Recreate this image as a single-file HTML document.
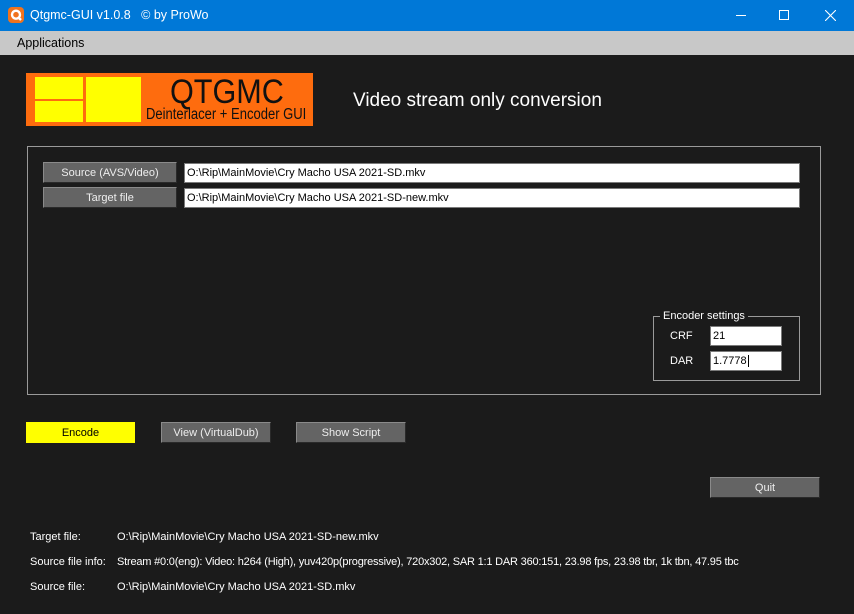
<!DOCTYPE html>
<html><head><meta charset="utf-8"><style>
*{margin:0;padding:0;box-sizing:border-box}
body{width:854px;height:614px;background:#1b1b1b;font-family:"Liberation Sans",sans-serif;font-size:12px;color:#fff;position:relative;overflow:hidden}
.a{position:absolute}
.title{left:0;top:0;width:854px;height:31px;background:#0078d7;color:#fff;font-size:12.5px}
.menu{left:0;top:31px;width:854px;height:24px;background:#c8c8c8;color:#000;font-size:12.5px}
.btn{background:#646464;border:1px solid #8a8a8a;border-right-color:#2a2a2a;border-bottom-color:#2a2a2a;color:#eee;text-align:center;font-size:11px}
.inp{background:#fff;border:1px solid #7a7a7a;color:#000;font-size:11px;padding-left:2px;line-height:18px}
.lbl{font-size:11px;color:#fff}
</style></head><body>
<div class="a title">
 <svg class="a" style="left:8px;top:7px" width="16" height="16" viewBox="0 0 16 16"><rect x="0" y="0" width="16" height="16" rx="4" fill="#f0731e"/><circle cx="8" cy="7.7" r="4" fill="none" stroke="#fff" stroke-width="2.4"/><path d="M10 10l3 3" stroke="#fff" stroke-width="2.4"/></svg>
 <div class="a" style="left:30px;top:8px">Qtgmc-GUI v1.0.8 &nbsp;&nbsp;© by ProWo</div>
 <div class="a" style="left:736px;top:15px;width:10px;height:1px;background:#fff"></div>
 <div class="a" style="left:779px;top:10px;width:10px;height:10px;border:1px solid #fff"></div>
 <svg class="a" style="left:825px;top:10px" width="11" height="11"><path d="M0 0L11 11M11 0L0 11" stroke="#fff" stroke-width="1.1"/></svg>
</div>
<div class="a menu"><div class="a" style="left:17px;top:5px">Applications</div></div>
<div class="a" style="left:26px;top:73px;width:287px;height:53px;background:#fe6c0e">
 <div class="a" style="left:9px;top:4px;width:48px;height:22px;background:#ffff00"></div>
 <div class="a" style="left:9px;top:28px;width:48px;height:21px;background:#ffff00"></div>
 <div class="a" style="left:60px;top:4px;width:55px;height:45px;background:#ffff00"></div>
 <div class="a" style="left:144px;top:0px;font-size:34px;color:#111;transform:scaleX(.9);transform-origin:left">QTGMC</div>
 <div class="a" style="left:120px;top:33px;font-size:15.5px;color:#111;transform:scaleX(.84);transform-origin:left;white-space:nowrap">Deinterlacer + Encoder GUI</div>
</div>
<div class="a" style="left:353px;top:90px;font-size:19px;color:#fff">Video stream only conversion</div>
<div class="a" style="left:27px;top:146px;width:794px;height:249px;border:1px solid #9a9a9a"></div>
<div class="a btn" style="left:43px;top:162px;width:134px;height:21px;line-height:21px">Source (AVS/Video)</div>
<div class="a btn" style="left:43px;top:187px;width:134px;height:21px;line-height:21px">Target file</div>
<div class="a inp" style="left:184px;top:163px;width:616px;height:20px">O:\Rip\MainMovie\Cry Macho USA 2021-SD.mkv</div>
<div class="a inp" style="left:184px;top:188px;width:616px;height:20px">O:\Rip\MainMovie\Cry Macho USA 2021-SD-new.mkv</div>
<div class="a" style="left:653px;top:316px;width:147px;height:65px;border:1px solid #9a9a9a"></div>
<div class="a lbl" style="left:660px;top:310px;background:#1b1b1b;padding:0 3px">Encoder settings</div>
<div class="a lbl" style="left:670px;top:330px">CRF</div>
<div class="a lbl" style="left:670px;top:355px">DAR</div>
<div class="a inp" style="left:710px;top:326px;width:72px;height:20px">21</div>
<div class="a inp" style="left:710px;top:351px;width:72px;height:20px">1.7778<span style="border-left:1px solid #000;margin-left:1px"></span></div>
<div class="a" style="left:26px;top:422px;width:109px;height:21px;background:#ffff00;color:#000;text-align:center;line-height:23px;font-size:11px">Encode</div>
<div class="a btn" style="left:161px;top:422px;width:110px;height:21px;line-height:21px">View (VirtualDub)</div>
<div class="a btn" style="left:296px;top:422px;width:110px;height:21px;line-height:21px">Show Script</div>
<div class="a btn" style="left:710px;top:477px;width:110px;height:21px;line-height:21px">Quit</div>
<div class="a lbl" style="left:30px;top:531px">Target file:</div>
<div class="a lbl" style="left:117px;top:531px">O:\Rip\MainMovie\Cry Macho USA 2021-SD-new.mkv</div>
<div class="a lbl" style="left:30px;top:556px">Source file info:</div>
<div class="a lbl" style="left:117px;top:556px;white-space:nowrap;letter-spacing:-0.2px">Stream #0:0(eng): Video: h264 (High), yuv420p(progressive), 720x302, SAR 1:1 DAR 360:151, 23.98 fps, 23.98 tbr, 1k tbn, 47.95 tbc</div>
<div class="a lbl" style="left:30px;top:581px">Source file:</div>
<div class="a lbl" style="left:117px;top:581px">O:\Rip\MainMovie\Cry Macho USA 2021-SD.mkv</div>
</body></html>
